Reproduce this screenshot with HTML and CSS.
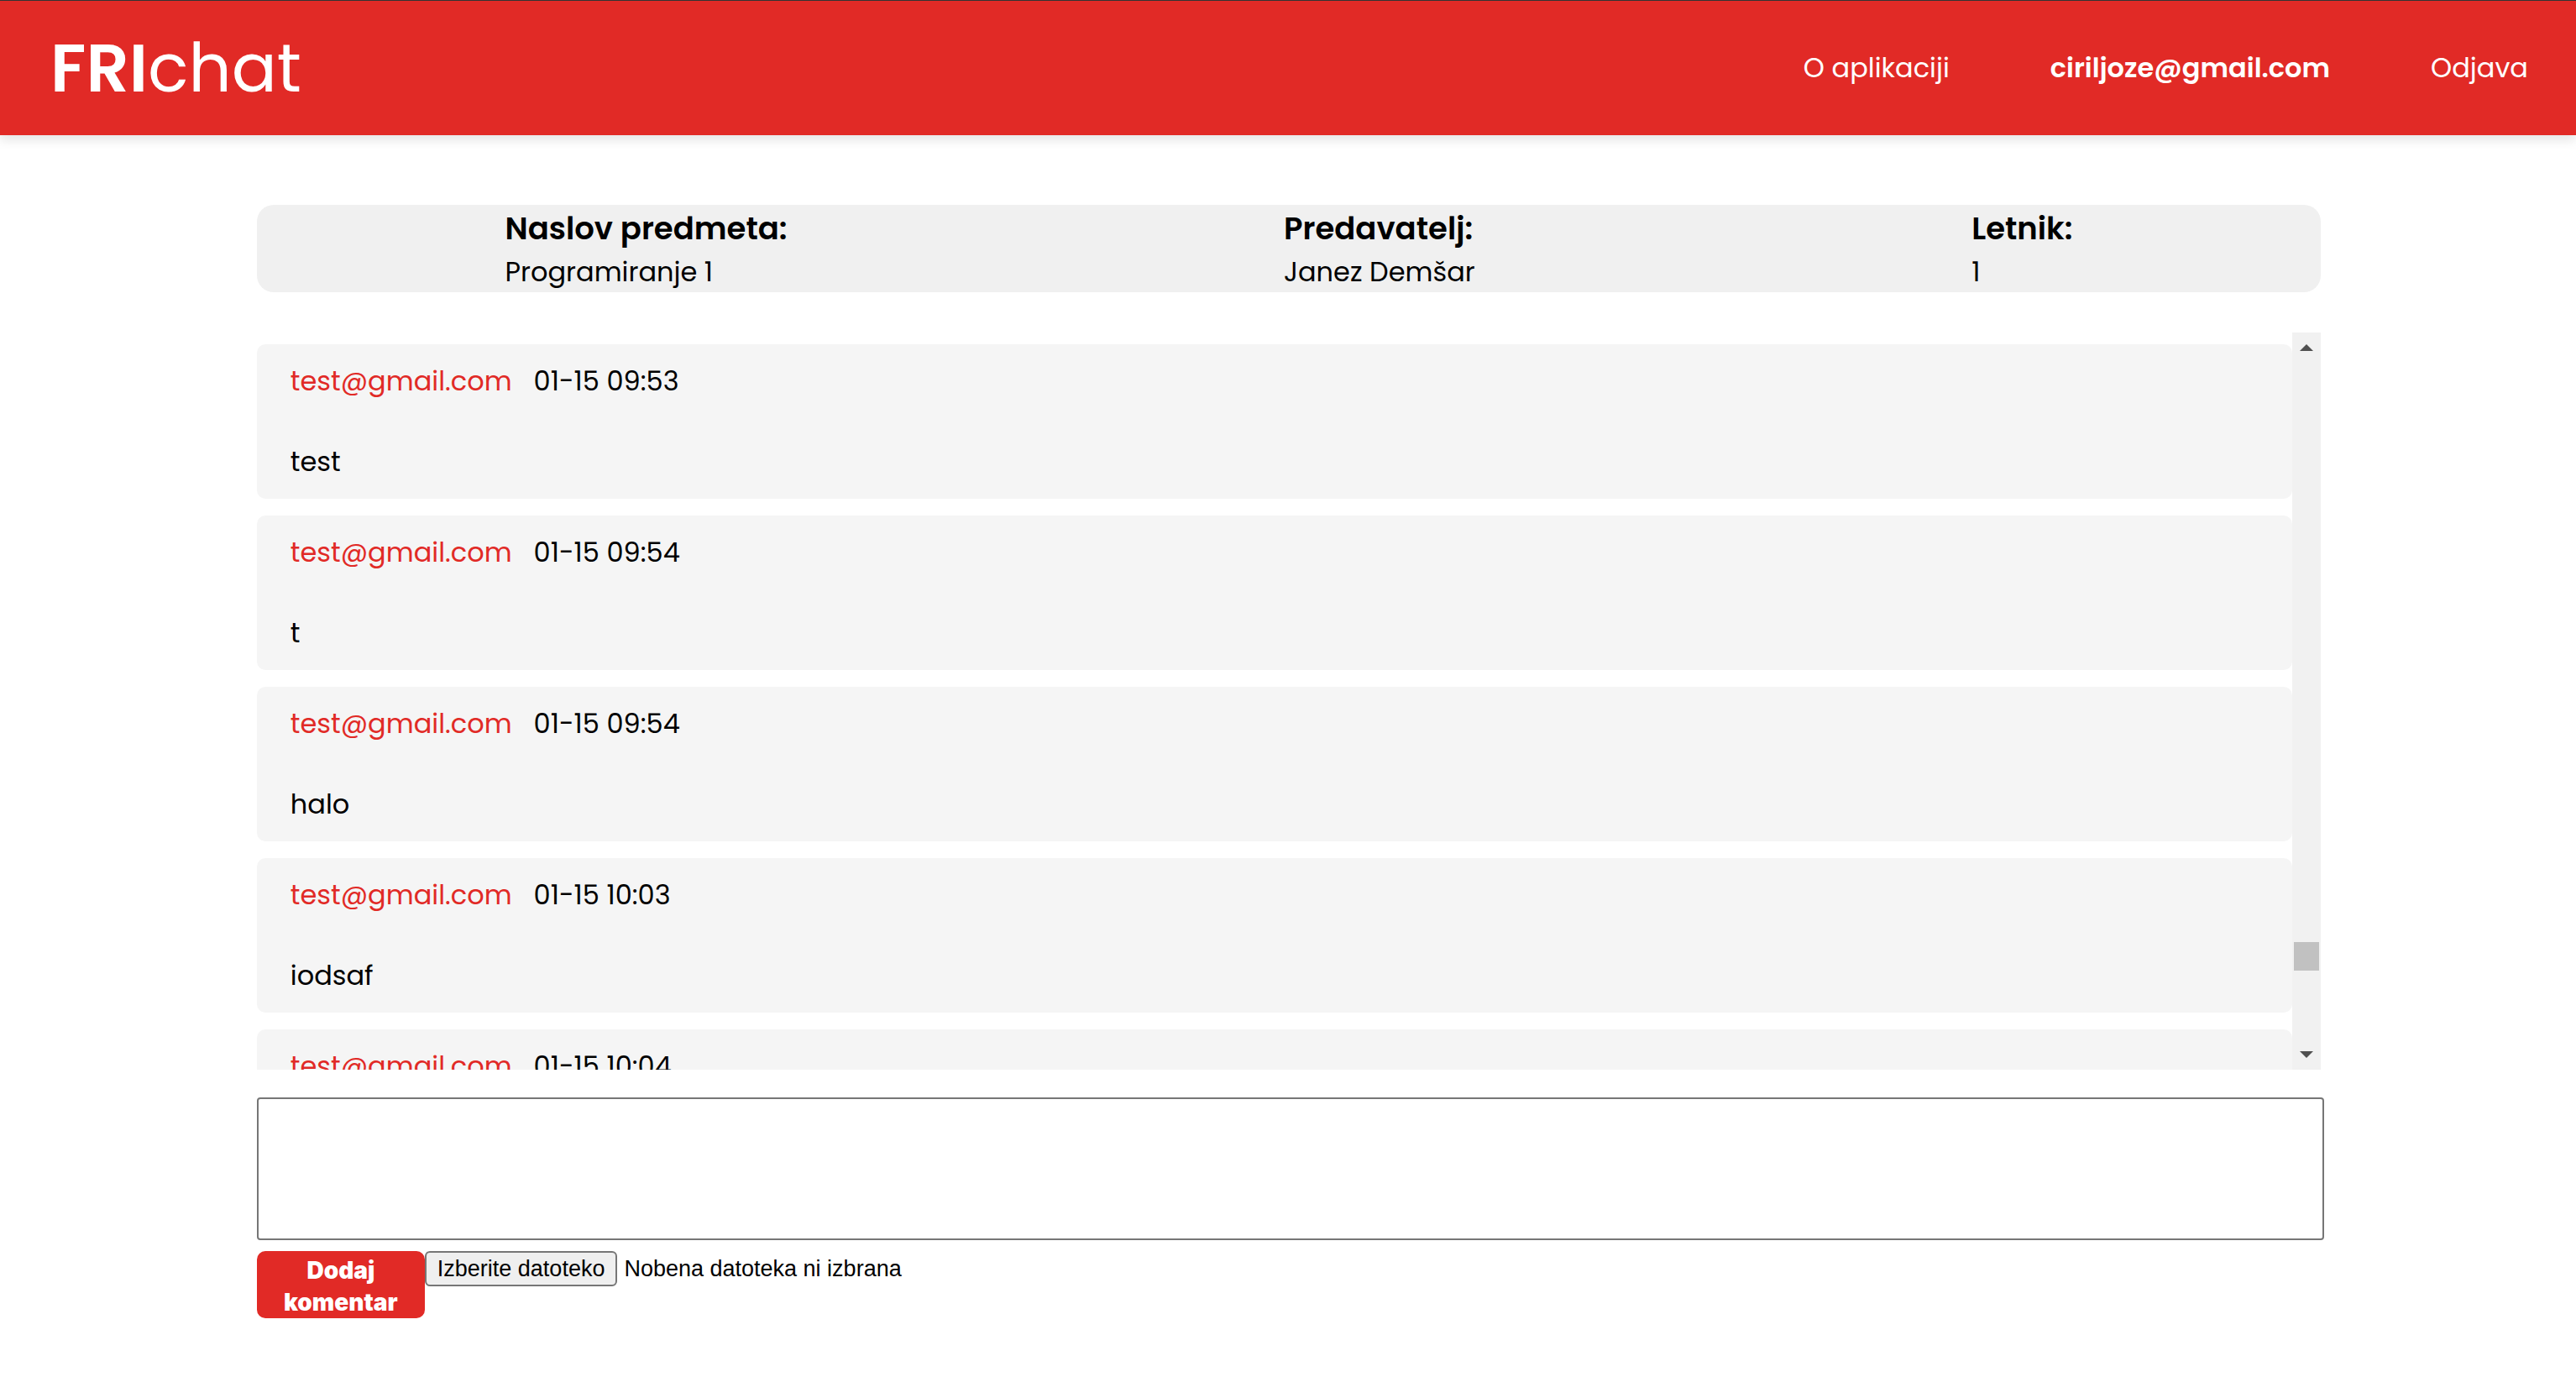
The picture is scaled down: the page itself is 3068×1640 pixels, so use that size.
FILE: index.html
```html
<!DOCTYPE html>
<html lang="sl">
<head>
  <meta charset="utf-8">
  <meta name="viewport" content="width=device-width, initial-scale=1">
  <title>FRIchat</title>
  <link rel="stylesheet" href="styles.css">
</head>
<body>
  <header class="header">
    <a class="logo" href="#"><strong>FRI</strong>chat</a>
    <nav class="nav">
      <a href="#">O aplikaciji</a>
      <a class="nav-user" href="#">ciriljoze@gmail.com</a>
      <a href="#">Odjava</a>
    </nav>
  </header>

  <main class="content">
    <section class="subject">
      <div>
        <h3>Naslov predmeta:</h3>
        <p>Programiranje 1</p>
      </div>
      <div>
        <h3>Predavatelj:</h3>
        <p>Janez Demšar</p>
      </div>
      <div>
        <h3>Letnik:</h3>
        <p>1</p>
      </div>
    </section>

    <section class="comments">
      <div class="comment-list">
        <article class="comment">
          <div class="comment-head"><span class="author">test@gmail.com</span><time>01-15 09:53</time></div>
          <p>test</p>
        </article>
        <article class="comment">
          <div class="comment-head"><span class="author">test@gmail.com</span><time>01-15 09:54</time></div>
          <p>t</p>
        </article>
        <article class="comment">
          <div class="comment-head"><span class="author">test@gmail.com</span><time>01-15 09:54</time></div>
          <p>halo</p>
        </article>
        <article class="comment">
          <div class="comment-head"><span class="author">test@gmail.com</span><time>01-15 10:03</time></div>
          <p>iodsaf</p>
        </article>
        <article class="comment">
          <div class="comment-head"><span class="author">test@gmail.com</span><time>01-15 10:04</time></div>
        </article>
      </div>
      <div class="scrollbar" aria-hidden="true">
        <svg width="16" height="8" viewBox="0 0 16 8"><path d="M8 0 16 8H0Z" fill="#505050"/></svg>
        <div class="track"><div class="thumb"></div></div>
        <svg width="16" height="8" viewBox="0 0 16 8"><path d="M0 0H16L8 8Z" fill="#505050"/></svg>
      </div>
    </section>

    <form class="comment-form">
      <textarea class="comment-input" aria-label="Komentar"></textarea>
      <div class="actions">
        <button class="submit" type="button">Dodaj komentar</button>
        <input class="file-input" type="file" id="file">
        <label class="file-button" for="file">Izberite datoteko</label>
        <span class="file-status">Nobena datoteka ni izbrana</span>
      </div>
    </form>
  </main>
</body>
</html>
```
FILE: styles.css
```css
* {
  box-sizing: border-box;
}

body {
  margin: 0;
  background: #fff;
  color: #000;
  font-family: Poppins, Inter, sans-serif;
  font-size: 32px;
  line-height: 48px;
}

h3,
p {
  margin: 0;
}

.header {
  display: flex;
  align-items: center;
  justify-content: space-between;
  padding: 20px 57px 20px 60px;
  border-top: 1px solid #333;
  background: #e12a26;
  box-shadow: 0 6px 12px rgba(0, 0, 0, 0.1);
}

.header a {
  color: #fff;
  text-decoration: none;
}

.logo {
  font-size: 80px;
  line-height: 120px;
}

.logo strong,
.nav-user {
  font-weight: 600;
}

.nav {
  display: flex;
  gap: 120px;
}

.content {
  margin: 83px calc(10% - 3px) 0 calc(10% - 1px);
}

.subject {
  display: flex;
  justify-content: space-around;
  margin-bottom: 48px;
  border-radius: 20px;
  background: #f0f0f0;
}

.subject h3 {
  font-size: 37px;
  font-weight: 600;
  line-height: 56px;
}

.comments {
  display: flex;
  height: 878px;
}

.comment-list {
  flex: 1;
  padding-top: 14px;
  overflow: hidden;
}

.comment {
  display: flex;
  flex-direction: column;
  gap: 48px;
  margin-bottom: 20px;
  padding: 20px 40px;
  border-radius: 10px;
  background: #f5f5f5;
}

.comment-head {
  display: flex;
  gap: 26px;
}

.author {
  color: #e12a26;
}

.scrollbar {
  display: flex;
  flex-direction: column;
  align-items: center;
  width: 34px;
  padding: 14px 2px;
  background: #f1f1f1;
}

.track {
  flex: 1;
  align-self: stretch;
  padding-top: 704px;
}

.thumb {
  height: 34px;
  background: #c1c1c1;
}

.comment-form {
  margin-top: 33px;
}

.comment-input {
  display: block;
  box-sizing: content-box;
  width: 100%;
  height: 166px;
  padding: 0;
  border: 2px solid #767676;
  border-radius: 4px;
  background: #fff;
  font: inherit;
  resize: none;
}

.actions {
  display: flex;
  align-items: flex-start;
  margin-top: 13px;
  font-family: "Liberation Sans", Arial, sans-serif;
  font-size: 27px;
  line-height: 38px;
}

.submit {
  width: 200px;
  padding: 4px 12px 0;
  border: 0;
  border-radius: 10px;
  background: #e12a26;
  color: #fff;
  font-family: Inter, sans-serif;
  font-size: 28px;
  font-weight: 900;
  line-height: 38px;
}

.file-input {
  position: absolute;
  width: 1px;
  height: 1px;
  opacity: 0;
}

.file-button {
  padding: 0 13px;
  border: 2px solid #767676;
  border-radius: 6px;
  background: #efefef;
}

.file-status {
  margin-left: 8px;
  padding-top: 2px;
}
```
